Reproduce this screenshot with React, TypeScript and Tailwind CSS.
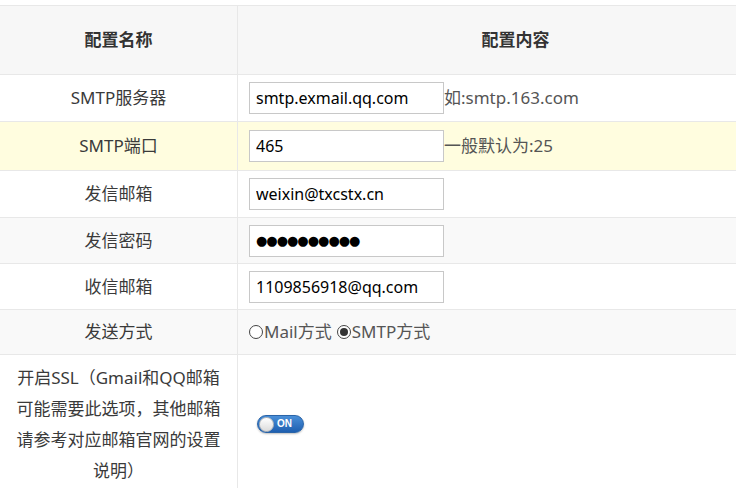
import React from 'react';

const font = { fontFamily: '"Noto Sans", "Noto Sans CJK SC", sans-serif' };

const Row = ({ label, bg, h, children }: { label: React.ReactNode; bg: string; h: string; children?: React.ReactNode }) => (
  <div className={`flex border-b border-[#e8e8e8] ${bg} ${h}`}>
    <div className="w-[238px] shrink-0 border-r border-[#e8e8e8] flex items-center justify-center text-center text-[17px] text-[#3a3a3a]">
      {label}
    </div>
    <div className="flex-1 flex items-center pl-[11px] text-[17px] text-[#555]">{children}</div>
  </div>
);

const Field = ({ value, dots }: { value: string; dots?: boolean }) => (
  <input
    type="text"
    defaultValue={value}
    readOnly
    className={`w-[195px] h-[32px] border border-[#c8c8c8] bg-white px-[6px] text-black outline-none ${dots ? 'text-[13px] tracking-[-1px]' : 'text-[16px]'}`}
    style={dots ? { fontFamily: '"DejaVu Sans", sans-serif' } : font}
  />
);

const Radio = ({ checked }: { checked?: boolean }) => (
  <span className="inline-flex w-[14px] h-[14px] rounded-full border border-[#444] items-center justify-center mr-[1px] bg-white">
    {checked && <span className="w-[8px] h-[8px] rounded-full bg-[#333]" />}
  </span>
);

export default function App() {
  return (
    <div className="w-[736px] h-[488px] overflow-hidden bg-white pt-[5px]" style={font}>
      <div className="w-[793px] border-t border-[#e8e8e8]">
        {/* header */}
        <div className="flex border-b border-[#e8e8e8] bg-[#f7f7f7] h-[69px]">
          <div className="w-[238px] shrink-0 border-r border-[#e8e8e8] flex items-center justify-center font-bold text-[17px] text-[#333]">
            配置名称
          </div>
          <div className="flex-1 flex items-center justify-center font-bold text-[17px] text-[#333]">配置内容</div>
        </div>

        <Row label="SMTP服务器" bg="bg-white" h="h-[47px]">
          <Field value="smtp.exmail.qq.com" />
          <span>如:smtp.163.com</span>
        </Row>
        <Row label="SMTP端口" bg="bg-[#fffddf]" h="h-[49px]">
          <Field value="465" />
          <span>一般默认为:25</span>
        </Row>
        <Row label="发信邮箱" bg="bg-white" h="h-[47px]">
          <Field value="weixin@txcstx.cn" />
        </Row>
        <Row label="发信密码" bg="bg-[#f9f9f9]" h="h-[46px]">
          <Field value="●●●●●●●●●●" dots />
        </Row>
        <Row label="收信邮箱" bg="bg-white" h="h-[46px]">
          <Field value="1109856918@qq.com" />
        </Row>
        <Row label="发送方式" bg="bg-[#f9f9f9]" h="h-[45px]">
          <label className="inline-flex items-center">
            <Radio />
            <span>Mail方式</span>
          </label>
          <label className="inline-flex items-center ml-[5px]">
            <Radio checked />
            <span>SMTP方式</span>
          </label>
        </Row>

        {/* SSL row */}
        <div className="flex bg-white h-[140px]">
          <div className="w-[238px] shrink-0 border-r border-[#e8e8e8] pt-[7px] text-center text-[17px] leading-[31px] text-[#3a3a3a]">
            开启SSL（Gmail和QQ邮箱
            <br />
            可能需要此选项，其他邮箱
            <br />
            请参考对应邮箱官网的设置
            <br />
            说明）
          </div>
          <div className="flex-1 flex items-start pl-[19px] pt-[60px]">
            <span className="inline-flex items-center w-[47px] h-[18px] rounded-full bg-gradient-to-b from-[#4a8fd8] to-[#1e5fb0] border border-[#2a64a8] shadow-[0_1px_2px_rgba(0,0,0,0.25)]">
              <span className="w-[15px] h-[15px] ml-[1px] rounded-full bg-gradient-to-b from-white to-[#dcdcdc] border border-[#bbb]" />
              <span className="ml-[3px] text-[10px] font-bold text-white leading-none" style={{ fontFamily: '"Liberation Sans", sans-serif' }}>
                ON
              </span>
            </span>
          </div>
        </div>
      </div>
    </div>
  );
}
